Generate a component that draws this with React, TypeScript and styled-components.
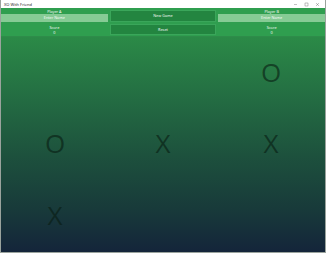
import React from "react";
import styled, { createGlobalStyle } from "styled-components";

const Global = createGlobalStyle`
  html, body { margin: 0; padding: 0; background: #ffffff; }
  body { font-family: "Open Sans", "Noto Sans", sans-serif; }
  * { box-sizing: border-box; }
`;

const Window = styled.div`
  width: 326px;
  height: 253px;
  display: flex;
  flex-direction: column;
  border: 1px solid #9aa39d;
  border-top: none;
  overflow: hidden;
`;

const TitleBar = styled.div`
  height: 8px;
  flex: none;
  background: #ffffff;
  display: flex;
  align-items: center;
  padding-left: 3px;
  font-family: "Open Sans", sans-serif;
  font-size: 4px;
  color: #111;
`;

const Title = styled.span`
  flex: 1;
`;

const Controls = styled.div`
  display: flex;
  align-items: center;
  gap: 6px;
  padding-right: 5px;
`;

const Ctl = styled.svg`
  width: 5px;
  height: 5px;
  stroke: #333;
  stroke-width: 0.6;
  fill: none;
`;

const Header = styled.div`
  flex: none;
  background: #2f9e4f;
  display: grid;
  grid-template-columns: 1fr 1fr 1fr;
  grid-template-rows: 14px 13px;
  column-gap: 2px;
  padding: 1px 0 0 0;
`;

const Side = styled.div`
  display: flex;
  flex-direction: column;
  align-items: center;
  color: #ffffff;
  font-size: 3.8px;
  line-height: 5px;
`;

const Label = styled.div`
  height: 5px;
`;

const NameInput = styled.div`
  width: 100%;
  height: 7.5px;
  background: #86cb95;
  color: #ffffff;
  display: flex;
  align-items: center;
  justify-content: center;
  font-size: 3.8px;
`;

const ScoreBox = styled.div`
  display: flex;
  flex-direction: column;
  align-items: center;
  color: #ffffff;
  font-size: 3.8px;
  line-height: 5.5px;
  padding-top: 1.5px;
`;

const Btn = styled.div<{ $top?: boolean }>`
  margin: ${(p) => (p.$top ? "0.5px 0 1px 0" : "1px 0 1px 0")};
  background: #238540;
  border: 0.6px solid #3aa65a;
  color: #ffffff;
  font-size: 3.8px;
  display: flex;
  align-items: center;
  justify-content: center;
`;

const Board = styled.div`
  flex: 1;
  display: grid;
  grid-template-columns: 1fr 1fr 1fr;
  grid-template-rows: 1fr 1fr 1fr;
  background: linear-gradient(180deg, #2b8a47 0%, #236b42 30%, #1d513d 55%, #183a3a 80%, #14253a 100%);
  border-top: 1px solid #2e8c4a;
`;

const Cell = styled.div`
  display: flex;
  align-items: center;
  justify-content: center;
  font-family: "Open Sans", sans-serif;
  font-weight: 400;
  font-size: 26px;
  color: rgba(8, 28, 18, 0.62);
  line-height: 1;
  padding-bottom: 2px;
`;

const cells = ["", "", "O", "O", "X", "X", "X", "", ""];

export default function App() {
  return (
    <>
      <Global />
      <Window>
        <TitleBar>
          <Title>XO With Friend</Title>
          <Controls>
            <Ctl viewBox="0 0 10 10"><path d="M2 5h6" /></Ctl>
            <Ctl viewBox="0 0 10 10"><rect x="2" y="2" width="6" height="6" /></Ctl>
            <Ctl viewBox="0 0 10 10"><path d="M2 2l6 6M8 2l-6 6" /></Ctl>
          </Controls>
        </TitleBar>
        <Header>
          <Side>
            <Label>Player A</Label>
            <NameInput>Enter Name</NameInput>
          </Side>
          <Btn $top>New Game</Btn>
          <Side>
            <Label>Player B</Label>
            <NameInput>Enter Name</NameInput>
          </Side>
          <ScoreBox>
            <div>Score</div>
            <div>0</div>
          </ScoreBox>
          <Btn>Reset</Btn>
          <ScoreBox>
            <div>Score</div>
            <div>0</div>
          </ScoreBox>
        </Header>
        <Board>
          {cells.map((c, i) => (
            <Cell key={i}>{c}</Cell>
          ))}
        </Board>
      </Window>
    </>
  );
}
